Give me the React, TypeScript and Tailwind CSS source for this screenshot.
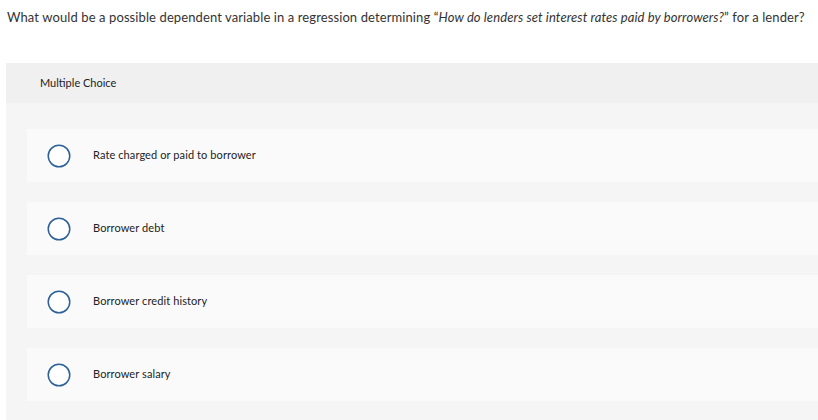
import React from 'react';

const options = [
    'Rate charged or paid to borrower',
    'Borrower debt',
    'Borrower credit history',
    'Borrower salary',
];

const Radio: React.FC = () => (
    <svg width="24" height="24" viewBox="0 0 24 24" className="shrink-0">
        <circle cx="12" cy="12" r="10.75" fill="white" stroke="#2d6197" strokeWidth="1.5" />
    </svg>
);

const App: React.FC = () => {
    return (
        <div className="w-[818px] h-[420px] overflow-hidden bg-white text-[#333]" style={{ fontFamily: 'Lato, "Open Sans", sans-serif' }}>
            <p className="pl-[7px] pt-[9px] text-[13px] leading-[16px] tracking-[0.1px]">
                What would be a possible dependent variable in a regression determining{' '}
                <span>“<i>How do lenders set interest rates paid by borrowers?</i>”</span> for a lender?
            </p>

            <div className="ml-[6px] mt-[38px]">
                <div className="h-[40px] bg-[#f0f0f0] flex items-center pl-[34px] text-[11px] text-[#222]">
                    Multiple Choice
                </div>
                <div className="bg-[#f5f5f5] pl-[21px] pt-[26px] pb-[20px] flex flex-col gap-[20px]">
                    {options.map(opt => (
                        <div key={opt} className="h-[53px] bg-[#fafafa] flex items-center pl-[20px]">
                            <Radio />
                            <span className="ml-[22px] text-[11px] tracking-[0.1px] text-[#222]">{opt}</span>
                        </div>
                    ))}
                </div>
            </div>
        </div>
    );
};

export default App;
